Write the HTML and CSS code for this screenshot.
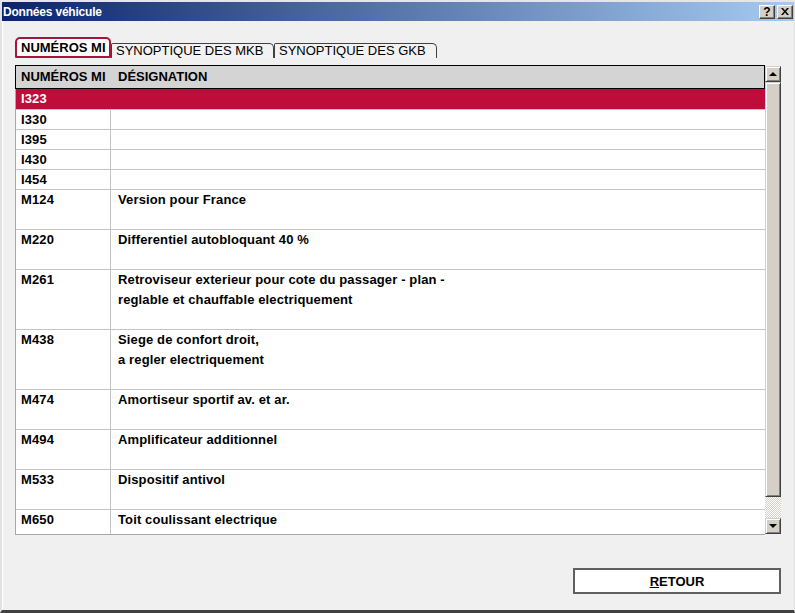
FILE: index.html
```html
<!DOCTYPE html>
<html lang="fr">
<head>
<meta charset="utf-8">
<title>Données véhicule</title>
<link rel="stylesheet" href="styles.css">
</head>
<body>
<div class="window">
  <div class="titlebar">
    <span class="title">Données véhicule</span>
    <div class="tb-buttons">
      <span class="tbtn help">?</span>
      <span class="tbtn close"><svg width="8" height="7" viewBox="0 0 8 7"><path d="M0 0h2l2 2.5L6 0h2L5 3.5 8 7H6L4 4.5 2 7H0l3-3.5z" fill="#000"/></svg></span>
    </div>
  </div>
  <div class="client">
    <div class="tabs">
      <div class="tab active">NUMÉROS MI</div>
      <div class="tab">SYNOPTIQUE DES MKB</div>
      <div class="tab">SYNOPTIQUE DES GKB</div>
    </div>
    <div class="grid-wrap">
      <div class="table">
        <div class="thead">
          <div class="c1">NUMÉROS MI</div>
          <div class="c2">DÉSIGNATION</div>
        </div>
        <div class="tbody">
          <div class="row sel h21"><div class="c1">I323</div><div class="c2"></div></div>
          <div class="row h20"><div class="c1">I330</div><div class="c2"></div></div>
          <div class="row h20"><div class="c1">I395</div><div class="c2"></div></div>
          <div class="row h20"><div class="c1">I430</div><div class="c2"></div></div>
          <div class="row h20"><div class="c1">I454</div><div class="c2"></div></div>
          <div class="row h40"><div class="c1">M124</div><div class="c2">Version pour France</div></div>
          <div class="row h40"><div class="c1">M220</div><div class="c2">Differentiel autobloquant 40 %</div></div>
          <div class="row h60"><div class="c1">M261</div><div class="c2">Retroviseur exterieur pour cote du passager - plan -<br>reglable et chauffable electriquement</div></div>
          <div class="row h60"><div class="c1">M438</div><div class="c2">Siege de confort droit,<br>a regler electriquement</div></div>
          <div class="row h40"><div class="c1">M474</div><div class="c2">Amortiseur sportif av. et ar.</div></div>
          <div class="row h40"><div class="c1">M494</div><div class="c2">Amplificateur additionnel</div></div>
          <div class="row h40"><div class="c1">M533</div><div class="c2">Dispositif antivol</div></div>
          <div class="row h40"><div class="c1">M650</div><div class="c2">Toit coulissant electrique</div></div>
        </div>
      </div>
      <div class="scrollbar">
        <div class="sb-btn"><span class="arrow up"></span></div>
        <div class="sb-thumb"></div>
        <div class="sb-track"></div>
        <div class="sb-btn"><span class="arrow down"></span></div>
      </div>
    </div>
    <div class="footer">
      <button class="btn"><u>R</u>ETOUR</button>
    </div>
  </div>
</div>
</body>
</html>
```
FILE: styles.css
```css
html, body {
  margin: 0;
  padding: 0;
}
body {
  width: 795px;
  height: 613px;
  overflow: hidden;
  font-family: "Liberation Sans", Arial, sans-serif;
  background: #f0f0f0;
}
.window {
  width: 795px;
  height: 613px;
  box-sizing: border-box;
  background: #f0f0f0;
  border-top: 2px solid #e6e6e6;
  border-left: 2px solid #e2e2e2;
  border-right: 1px solid #e2e2e2;
  border-bottom: 3px solid #404040;
  display: flex;
  flex-direction: column;
}
.titlebar {
  height: 19px;
  flex: none;
  display: flex;
  align-items: center;
  justify-content: space-between;
  background: linear-gradient(to right, #0a246a, #a6caf0);
  padding: 0 1px 0 1px;
}
.title {
  color: #fff;
  font-weight: bold;
  font-size: 12px;
  letter-spacing: -0.2px;
}
.tb-buttons {
  display: flex;
  gap: 2px;
}
.tbtn {
  width: 16px;
  height: 14px;
  box-sizing: border-box;
  background: #d4d0c8;
  border-top: 1px solid #fff;
  border-left: 1px solid #fff;
  border-right: 1px solid #404040;
  border-bottom: 1px solid #404040;
  box-shadow: inset -1px -1px 0 #808080;
  display: flex;
  align-items: center;
  justify-content: center;
  font-weight: bold;
  font-size: 12px;
  line-height: 12px;
  color: #000;
}
.client {
  flex: 1;
  display: flex;
  flex-direction: column;
  padding: 16px 0 0 13px;
  box-shadow: inset 1px 0 0 #fff;
}
.tabs {
  display: flex;
  align-items: flex-end;
  height: 21px;
}
.tab {
  box-sizing: border-box;
  height: 15px;
  width: 163px;
  border: 1px solid #404040;
  border-bottom: none;
  border-radius: 2px 5px 0 0;
  background: #f2f2f2;
  font-size: 13px;
  line-height: 14px;
  padding-left: 4px;
  color: #000;
  white-space: nowrap;
}
.tab.active {
  width: 96px;
  height: 21px;
  border: 2px solid #a8143c;
  border-radius: 5px 5px 1px 1px;
  background: #fff;
  font-weight: bold;
  line-height: 17px;
  padding-left: 4px;
}
.grid-wrap {
  margin-top: 7px;
  display: flex;
  height: 470px;
}
.table {
  width: 750px;
  display: flex;
  flex-direction: column;
}
.thead {
  height: 24px;
  box-sizing: border-box;
  flex: none;
  border: 1px solid #000;
  background: #d4d4d4;
  display: flex;
  font-weight: bold;
  font-size: 13px;
  line-height: 22px;
}
.thead .c1 {
  width: 95px;
  padding-left: 5px;
  box-sizing: border-box;
}
.thead .c2 {
  padding-left: 7px;
}
.tbody {
  flex: 1;
  overflow: hidden;
  box-sizing: border-box;
  border-left: 1px solid #a8a8a8;
  border-bottom: 1px solid #a8a8a8;
  background: #fff;
}
.row {
  display: flex;
  box-sizing: border-box;
  border-bottom: 1px solid #c4c4c4;
  font-weight: bold;
  font-size: 13px;
  line-height: 20px;
  letter-spacing: 0.13px;
  color: #000;
}
.row.h20 { height: 20px; }
.row.h21 { height: 21px; }
.row.h40 { height: 40px; }
.row.h60 { height: 60px; }
.row .c1 {
  width: 95px;
  flex: none;
  box-sizing: border-box;
  padding-left: 5px;
  border-right: 1px solid #c4c4c4;
}
.row .c2 {
  flex: 1;
  padding-left: 7px;
  white-space: nowrap;
}
.row.sel {
  background: #bf0c3a;
  color: #fff;
}
.row.sel .c1 {
  border-right-color: #bf0c3a;
}
.scrollbar {
  width: 16px;
  margin-top: 1px;
  height: 468px;
  display: flex;
  flex-direction: column;
}
.sb-btn, .sb-thumb {
  box-sizing: border-box;
  background: #d4d0c8;
  border-top: 1px solid #d4d0c8;
  border-left: 1px solid #d4d0c8;
  border-right: 1px solid #404040;
  border-bottom: 1px solid #404040;
  box-shadow: inset 1px 1px 0 #fff, inset -1px -1px 0 #808080;
}
.sb-btn {
  height: 16px;
  flex: none;
  display: flex;
  align-items: center;
  justify-content: center;
}
.sb-thumb {
  height: 415px;
  flex: none;
}
.sb-track {
  flex: 1;
  background: repeating-conic-gradient(#d4d0c8 0 25%, #fff 0 50%) 0 0 / 2px 2px;
}
.arrow {
  width: 0;
  height: 0;
  border-left: 4px solid transparent;
  border-right: 4px solid transparent;
}
.arrow.up {
  border-bottom: 4px solid #000;
}
.arrow.down {
  border-top: 4px solid #000;
}
.footer {
  display: flex;
  justify-content: flex-end;
  width: 766px;
  margin-top: 33px;
}
.btn {
  width: 208px;
  height: 26px;
  box-sizing: border-box;
  border: 2px solid #606060;
  background: #fff;
  font-family: "Liberation Sans", Arial, sans-serif;
  font-weight: bold;
  font-size: 13px;
  color: #000;
  padding: 0;
  margin: 0;
}
```
